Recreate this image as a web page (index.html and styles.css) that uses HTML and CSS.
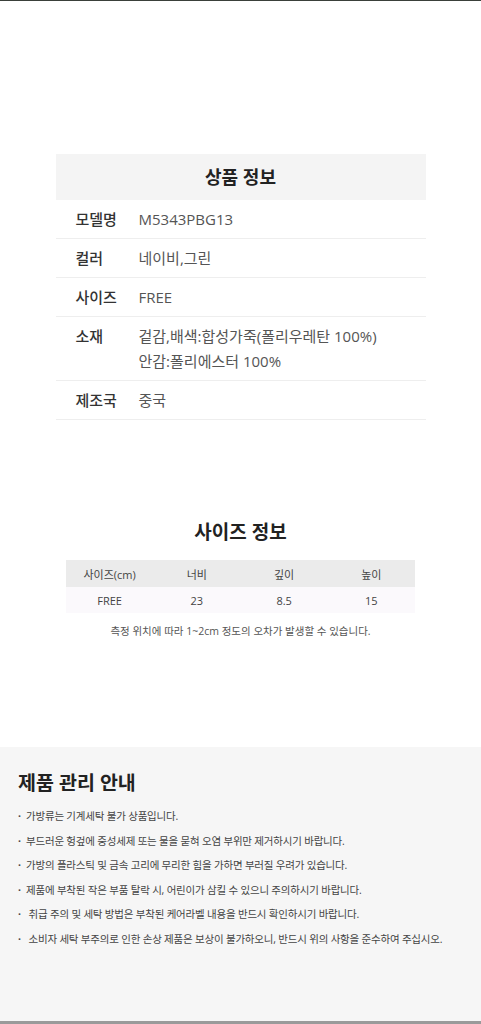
FILE: index.html
```html
<!DOCTYPE html>
<html lang="ko">
<head>
  <meta charset="UTF-8" />
  <meta name="viewport" content="width=device-width, initial-scale=1" />
  <title>상품 상세</title>
  <link rel="stylesheet" href="styles.css">
</head>
<body>
  <div class="page">
    <section class="info">
      <h2 class="info-title">상품 정보</h2>
      <div class="info-row"><span class="label">모델명</span><span class="value">M5343PBG13</span></div>
      <div class="info-row"><span class="label">컬러</span><span class="value">네이비,그린</span></div>
      <div class="info-row"><span class="label">사이즈</span><span class="value">FREE</span></div>
      <div class="info-row"><span class="label">소재</span><span class="value">겉감,배색:합성가죽(폴리우레탄 100%)<br>안감:폴리에스터 100%</span></div>
      <div class="info-row"><span class="label">제조국</span><span class="value">중국</span></div>
    </section>

    <section class="size">
      <h2 class="size-title">사이즈 정보</h2>
      <table class="size-table">
        <thead>
          <tr><th>사이즈(cm)</th><th>너비</th><th>깊이</th><th>높이</th></tr>
        </thead>
        <tbody>
          <tr><td>FREE</td><td>23</td><td>8.5</td><td>15</td></tr>
        </tbody>
      </table>
      <p class="size-note">측정 위치에 따라 1~2cm 정도의 오차가 발생할 수 있습니다.</p>
    </section>

    <section class="care">
      <h2 class="care-title">제품 관리 안내</h2>
      <ul class="care-list">
        <li>가방류는 기계세탁 불가 상품입니다.</li>
        <li>부드러운 헝겊에 중성세제 또는 물을 묻혀 오염 부위만 제거하시기 바랍니다.</li>
        <li>가방의 플라스틱 및 금속 고리에 무리한 힘을 가하면 부러질 우려가 있습니다.</li>
        <li>제품에 부착된 작은 부품 탈락 시, 어린이가 삼킬 수 있으니 주의하시기 바랍니다.</li>
        <li class="indent">취급 주의 및 세탁 방법은 부착된 케어라벨 내용을 반드시 확인하시기 바랍니다.</li>
        <li class="indent">소비자 세탁 부주의로 인한 손상 제품은 보상이 불가하오니, 반드시 위의 사항을 준수하여 주십시오.</li>
      </ul>
    </section>
  </div>
</body>
</html>
```

FILE: styles.css
```css
* { box-sizing: border-box; }
body {
  margin: 0;
  font-family: "Open Sans", "Noto Sans CJK KR", sans-serif;
  background: #fff;
  color: #333;
  border-top: 1px solid #3a403a;
}
.page {
  min-height: 1023px;
  display: flex;
  flex-direction: column;
}
.info {
  width: 370px;
  margin: 153px auto 0;
}
.info-title {
  margin: 0;
  height: 46px;
  line-height: 46px;
  text-align: center;
  background: #f4f4f4;
  font-size: 18px;
  font-weight: 700;
  color: #222;
}
.info-row {
  display: flex;
  padding: 7px 0 6px 20px;
  border-bottom: 1px solid #eeeeee;
  font-size: 15px;
  line-height: 25px;
}
.label {
  width: 63px;
  flex-shrink: 0;
  font-weight: 500;
  color: #333;
}
.value {
  color: #555;
}
.size {
  width: 349px;
  margin: 98px auto 0;
}
.size-title {
  margin: 0 0 14px;
  text-align: center;
  font-size: 19px;
  font-weight: 700;
  line-height: 28px;
  color: #222;
}
.size-table {
  width: 100%;
  border-collapse: collapse;
  table-layout: fixed;
  font-size: 11px;
  color: #444;
}
.size-table th {
  background: #ebebeb;
  font-weight: 400;
  height: 27px;
}
.size-table td {
  background: #fbf9fc;
  text-align: center;
  height: 26px;
}
.size-note {
  margin: 10px 0 0;
  text-align: center;
  font-size: 10.5px;
  color: #555;
}
.care {
  margin-top: 109px;
  flex: 1;
  background: #f6f6f6;
  border-bottom: 3px solid #9a9a9a;
  padding: 23px 18px 0;
}
.care-title {
  margin: 0 0 8px;
  font-size: 19.5px;
  font-weight: 700;
  line-height: 26px;
  color: #222;
}
.care-list {
  list-style: none;
  margin: 0;
  padding: 0;
  font-size: 10.5px;
  line-height: 24.6px;
  color: #444;
  letter-spacing: -0.2px;
}
.care-list li::before {
  content: "·";
  display: inline-block;
  width: 8px;
  font-weight: 700;
}
.care-list li.indent::before {
  width: 10.5px;
}
```
